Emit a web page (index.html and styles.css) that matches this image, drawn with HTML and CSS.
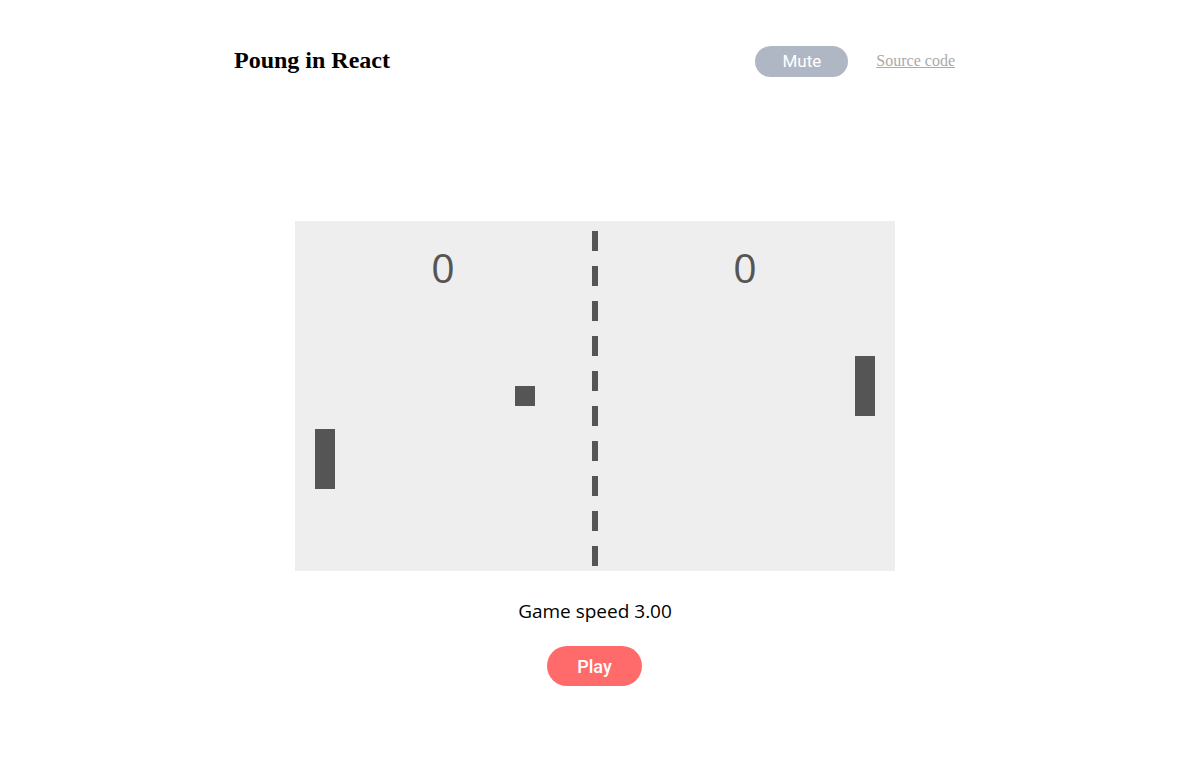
FILE: index.html
```html
<!DOCTYPE html>
<html>
<head>
<meta charset="utf-8">
<link rel="stylesheet" href="styles.css">
</head>
<body>
<div class="page">
  <header class="header">
    <h1 class="title">Poung in React</h1>
    <div class="header-actions">
      <button class="btn btn-mute">Mute</button>
      <a class="source" href="#">Source code</a>
    </div>
  </header>
  <main class="main">
    <div class="board">
      <div class="score score-left">0</div>
      <div class="score score-right">0</div>
      <div class="net">
        <span></span><span></span><span></span><span></span><span></span>
        <span></span><span></span><span></span><span></span><span></span>
      </div>
      <div class="paddle paddle-left"></div>
      <div class="paddle paddle-right"></div>
      <div class="ball"></div>
    </div>
    <p class="speed">Game speed 3.00</p>
    <button class="btn btn-play">Play</button>
  </main>
</div>
</body>
</html>
```
FILE: styles.css
```css
* { box-sizing: border-box; }
html, body { margin: 0; padding: 0; background: #fff; }
body { font-family: "Liberation Serif", serif; }
.page { width: 722px; margin: 0 auto; padding-top: 44px; }
.header { display: flex; align-items: center; justify-content: space-between; height: 34px; }
.title { margin: 0; font-size: 24px; font-weight: bold; color: #000; line-height: 34px; position: relative; top: -1px; }
.header-actions { display: flex; align-items: center; gap: 28px; margin-right: 1px; }
.btn { border: none; border-radius: 20px; color: #fff; font-family: Roboto, "Noto Sans", sans-serif; font-weight: 500; cursor: pointer; padding: 0; }
.btn-mute { width: 93px; height: 31px; background: #b0b7c4; font-size: 17px; font-weight: 400; }
.source { color: #aaa; font-size: 16px; text-decoration: underline; }
.main { display: flex; flex-direction: column; align-items: center; margin-top: 143px; }
.board { position: relative; width: 600px; height: 350px; background: #eeeeee; }
.score { position: absolute; top: 16px; width: 60px; margin-left: -30px; text-align: center; font-family: "Open Sans", sans-serif; font-size: 41px; line-height: 60px; color: #555; }
.score-left { left: 148px; }
.score-right { left: 450px; }
.net { position: absolute; left: 297px; top: 10px; width: 6px; display: flex; flex-direction: column; gap: 15px; }
.net span { display: block; width: 6px; height: 20px; background: #555; }
.paddle { position: absolute; width: 20px; height: 60px; background: #555; }
.paddle-left { left: 20px; top: 208px; }
.paddle-right { left: 560px; top: 135px; }
.ball { position: absolute; left: 220px; top: 165px; width: 20px; height: 20px; background: #555; }
.speed { margin: 28px 0 0; font-family: "Open Sans", sans-serif; font-size: 19px; line-height: 24px; color: #000; }
.btn-play { margin-top: 23px; margin-right: 1px; width: 95px; height: 40px; background: #ff6b6b; font-size: 18px; }
```
